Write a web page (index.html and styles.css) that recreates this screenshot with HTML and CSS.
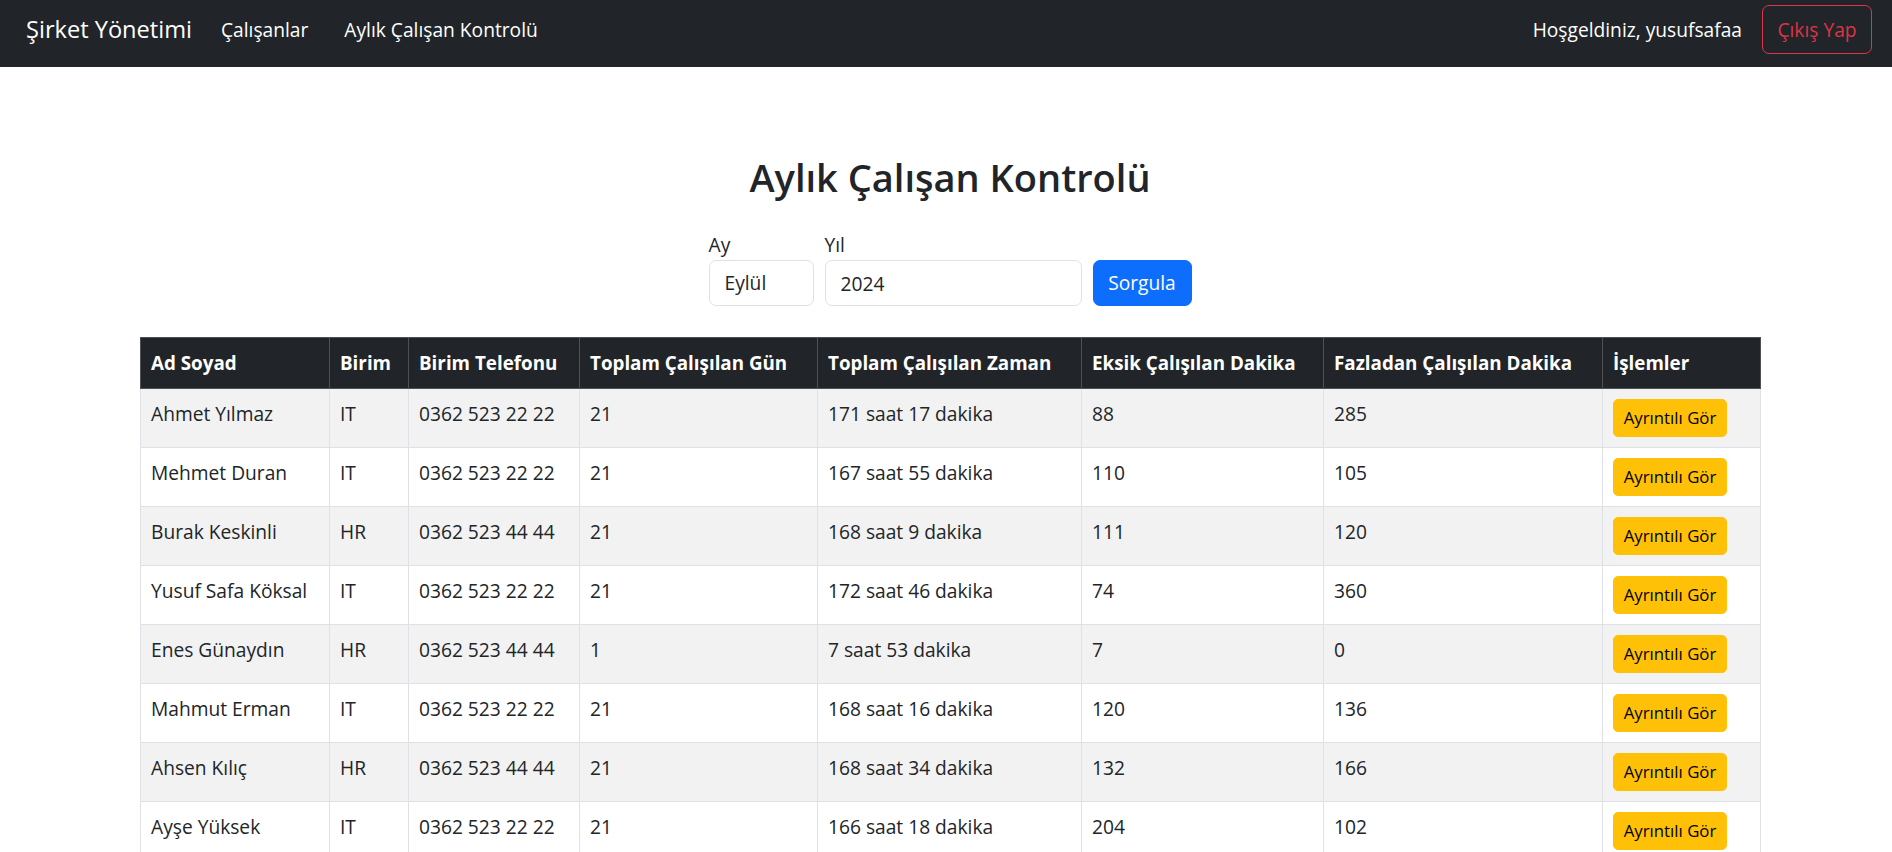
FILE: index.html
```html
<!DOCTYPE html>
<html lang="tr">
<head>
<meta charset="utf-8">
<title>Aylık Çalışan Kontrolü</title>
<link rel="stylesheet" href="styles.css">
</head>
<body>
<nav class="navbar">
  <div class="nav-left">
    <a class="brand" href="#">Şirket Yönetimi</a>
    <div class="nav-links">
      <a class="nav-link" href="#">Çalışanlar</a>
      <a class="nav-link" href="#">Aylık Çalışan Kontrolü</a>
    </div>
  </div>
  <div class="nav-right">
    <span class="welcome">Hoşgeldiniz, yusufsafaa</span>
    <button class="btn-logout">Çıkış Yap</button>
  </div>
</nav>

<main class="container">
  <h2 class="page-title">Aylık Çalışan Kontrolü</h2>

  <form class="query-form">
    <div class="field">
      <label class="field-label" for="ay">Ay</label>
      <select id="ay" class="control control-month"><option>Eylül</option></select>
    </div>
    <div class="field">
      <label class="field-label" for="yil">Yıl</label>
      <input id="yil" class="control control-year" type="text" value="2024">
    </div>
    <button type="button" class="btn-query">Sorgula</button>
  </form>

  <table class="data-table">
    <colgroup>
      <col class="c-name"><col class="c-unit"><col class="c-phone"><col class="c-days">
      <col class="c-time"><col class="c-missing"><col class="c-extra"><col class="c-actions">
    </colgroup>
    <thead>
      <tr>
        <th>Ad Soyad</th><th>Birim</th><th>Birim Telefonu</th><th>Toplam Çalışılan Gün</th>
        <th>Toplam Çalışılan Zaman</th><th>Eksik Çalışılan Dakika</th><th>Fazladan Çalışılan Dakika</th><th>İşlemler</th>
      </tr>
    </thead>
    <tbody>
      <tr><td>Ahmet Yılmaz</td><td>IT</td><td>0362 523 22 22</td><td>21</td><td>171 saat 17 dakika</td><td>88</td><td>285</td><td><button class="btn-detail">Ayrıntılı Gör</button></td></tr>
      <tr><td>Mehmet Duran</td><td>IT</td><td>0362 523 22 22</td><td>21</td><td>167 saat 55 dakika</td><td>110</td><td>105</td><td><button class="btn-detail">Ayrıntılı Gör</button></td></tr>
      <tr><td>Burak Keskinli</td><td>HR</td><td>0362 523 44 44</td><td>21</td><td>168 saat 9 dakika</td><td>111</td><td>120</td><td><button class="btn-detail">Ayrıntılı Gör</button></td></tr>
      <tr><td>Yusuf Safa Köksal</td><td>IT</td><td>0362 523 22 22</td><td>21</td><td>172 saat 46 dakika</td><td>74</td><td>360</td><td><button class="btn-detail">Ayrıntılı Gör</button></td></tr>
      <tr><td>Enes Günaydın</td><td>HR</td><td>0362 523 44 44</td><td>1</td><td>7 saat 53 dakika</td><td>7</td><td>0</td><td><button class="btn-detail">Ayrıntılı Gör</button></td></tr>
      <tr><td>Mahmut Erman</td><td>IT</td><td>0362 523 22 22</td><td>21</td><td>168 saat 16 dakika</td><td>120</td><td>136</td><td><button class="btn-detail">Ayrıntılı Gör</button></td></tr>
      <tr><td>Ahsen Kılıç</td><td>HR</td><td>0362 523 44 44</td><td>21</td><td>168 saat 34 dakika</td><td>132</td><td>166</td><td><button class="btn-detail">Ayrıntılı Gör</button></td></tr>
      <tr><td>Ayşe Yüksek</td><td>IT</td><td>0362 523 22 22</td><td>21</td><td>166 saat 18 dakika</td><td>204</td><td>102</td><td><button class="btn-detail">Ayrıntılı Gör</button></td></tr>
    </tbody>
  </table>
</main>
</body>
</html>
```

FILE: styles.css
```css
* { box-sizing: border-box; }

html, body {
  margin: 0;
  padding: 0;
  background: #fff;
}

body {
  font-family: "Open Sans", "Noto Sans", "Liberation Sans", sans-serif;
  font-size: 19.2px;
  line-height: 30px;
  color: #212529;
}

/* ---------- navbar ---------- */
.navbar {
  height: 67px;
  background: #212529;
  display: flex;
  justify-content: space-between;
  align-items: flex-start;
  padding: 5px 20px 0 26px;
}

.nav-left,
.nav-right {
  display: flex;
  align-items: center;
  height: 49px;
}

.brand {
  font-size: 23.6px;
  line-height: 37px;
  color: #fff;
  text-decoration: none;
  margin-right: 29px;
}

.nav-links {
  display: flex;
  gap: 36px;
}

.nav-link {
  color: #fff;
  text-decoration: none;
  line-height: 30px;
}

.welcome {
  color: #fff;
  margin-right: 20px;
  line-height: 30px;
}

.btn-logout {
  font: inherit;
  color: #dc3545;
  background: transparent;
  border: 1px solid #dc3545;
  border-radius: 7px;
  height: 49px;
  width: 110px;
  padding: 0;
  line-height: 30px;
}

/* ---------- content ---------- */
.container {
  width: 1620px;
  margin: 0 auto;
  position: relative;
  left: 4px;
}

.page-title {
  margin: 87px 0 0;
  font-size: 38px;
  font-weight: 600;
  line-height: 46px;
  text-align: center;
}

.query-form {
  display: flex;
  justify-content: center;
  align-items: flex-end;
  gap: 11px;
  margin-top: 30px;
}

.field {
  display: flex;
  flex-direction: column;
}

.field-label {
  line-height: 30px;
}

.control {
  font: inherit;
  color: #212529;
  height: 46px;
  padding: 0 15px;
  border: 1px solid #dee2e6;
  border-radius: 7px;
  background: #fff;
  line-height: 30px;
  outline: none;
}

.control-month {
  width: 105px;
  appearance: none;
  -webkit-appearance: none;
}

.control-year {
  width: 257px;
}

.btn-query {
  font: inherit;
  color: #fff;
  background: #0d6efd;
  border: 1px solid #0d6efd;
  border-radius: 7px;
  height: 46px;
  width: 99px;
  padding: 0;
}

/* ---------- table ---------- */
.data-table {
  width: 1620px;
  margin-top: 31px;
  border-collapse: collapse;
  table-layout: fixed;
}

.c-name { width: 189px; }
.c-unit { width: 79px; }
.c-phone { width: 171px; }
.c-days { width: 238px; }
.c-time { width: 264px; }
.c-missing { width: 242px; }
.c-extra { width: 279px; }
.c-actions { width: 158px; }

.data-table th,
.data-table td {
  padding: 10px;
  line-height: 30px;
  text-align: left;
  vertical-align: top;
  white-space: nowrap;
}

.data-table th {
  background: #212529;
  color: #fff;
  font-size: 18.8px;
  font-weight: 700;
  border: 1px solid #4d5154;
}

.data-table td {
  border: 1px solid #dee2e6;
}

.data-table tbody tr:nth-child(odd) td {
  background: #f2f2f2;
}

.btn-detail {
  display: block;
  font: inherit;
  font-size: 16.8px;
  line-height: 36px;
  height: 38px;
  width: 114px;
  padding: 0;
  color: #000;
  background: #ffc107;
  border: 1px solid #ffc107;
  border-radius: 5px;
}
```
